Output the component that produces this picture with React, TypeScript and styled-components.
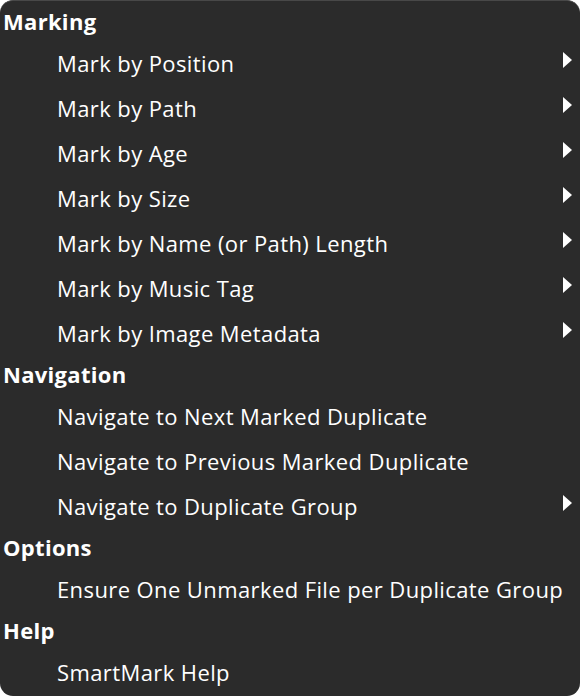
import styled, { createGlobalStyle } from "styled-components";

type Item = { label: string; sub?: boolean };
type Section = { title: string; items: Item[] };

const sections: Section[] = [
  {
    title: "Marking",
    items: [
      { label: "Mark by Position", sub: true },
      { label: "Mark by Path", sub: true },
      { label: "Mark by Age", sub: true },
      { label: "Mark by Size", sub: true },
      { label: "Mark by Name (or Path) Length", sub: true },
      { label: "Mark by Music Tag", sub: true },
      { label: "Mark by Image Metadata", sub: true },
    ],
  },
  {
    title: "Navigation",
    items: [
      { label: "Navigate to Next Marked Duplicate" },
      { label: "Navigate to Previous Marked Duplicate" },
      { label: "Navigate to Duplicate Group", sub: true },
    ],
  },
  {
    title: "Options",
    items: [{ label: "Ensure One Unmarked File per Duplicate Group" }],
  },
  {
    title: "Help",
    items: [{ label: "SmartMark Help" }],
  },
];

const App = () => {
  return (
    <>
      <GlobalStyle />
      <Menu>
        {sections.map((section) => (
          <Group key={section.title}>
            <Header>{section.title}</Header>
            {section.items.map((item) => (
              <Row key={item.label}>
                <Label>{item.label}</Label>
                {item.sub && (
                  <Arrow viewBox="0 0 9 16">
                    <path d="M0 0 L9 8 L0 16 Z" fill="#fff" />
                  </Arrow>
                )}
              </Row>
            ))}
          </Group>
        ))}
      </Menu>
    </>
  );
};

export default App;

const GlobalStyle = createGlobalStyle`
  html, body {
    margin: 0;
    background: #ffffff;
  }
  * {
    box-sizing: border-box;
  }
`;

const Menu = styled.div`
  width: 580px;
  height: 696px;
  background: #2b2b2b;
  border-radius: 13px;
  border-top: 1px solid #484848;
  padding-top: 1px;
  display: flex;
  flex-direction: column;
  font-family: "Open Sans", "Noto Sans", sans-serif;
  color: #ffffff;
  overflow: hidden;
`;

const Group = styled.section`
  display: flex;
  flex-direction: column;
`;

const Header = styled.div`
  height: 38px;
  display: flex;
  align-items: center;
  padding-left: 3px;
  font-size: 22px;
  font-weight: 700;
  letter-spacing: 0.3px;
`;

const Row = styled.div`
  height: 45px;
  display: flex;
  align-items: center;
  padding-left: 57px;
  padding-right: 8px;
`;

const Label = styled.span`
  flex: 1;
  font-size: 22px;
  letter-spacing: 0.4px;
  white-space: nowrap;
`;

const Arrow = styled.svg`
  width: 9px;
  height: 16px;
  margin-top: -5px;
`;
